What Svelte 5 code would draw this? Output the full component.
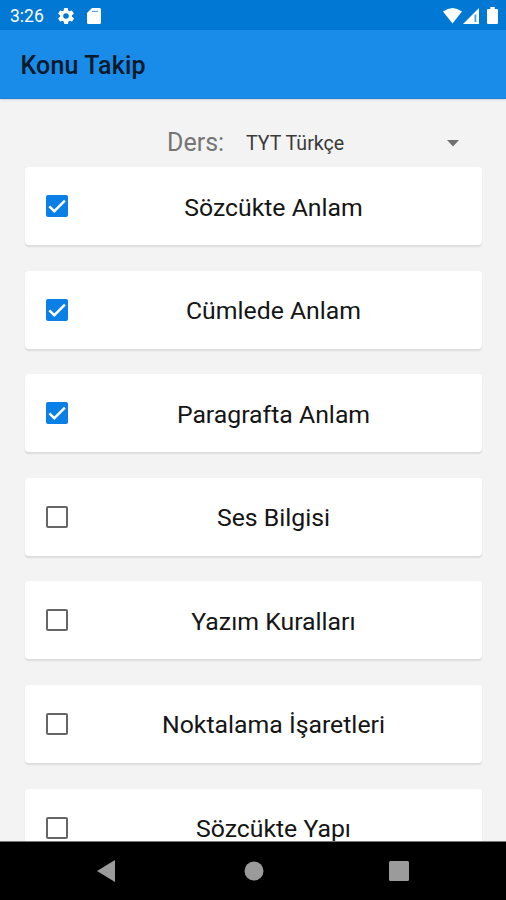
<script lang="ts">
	let course = $state('TYT Türkçe');

	let topics = $state([
		{ name: 'Sözcükte Anlam', done: true },
		{ name: 'Cümlede Anlam', done: true },
		{ name: 'Paragrafta Anlam', done: true },
		{ name: 'Ses Bilgisi', done: false },
		{ name: 'Yazım Kuralları', done: false },
		{ name: 'Noktalama İşaretleri', done: false },
		{ name: 'Sözcükte Yapı', done: false }
	]);
</script>

<div class="screen">
	<div class="status">
		<span class="time">3:26</span>
		<svg class="gear" viewBox="2 2 20 20" width="16" height="16">
			<path
				fill="#fff"
				d="M19.4 13a7.5 7.5 0 0 0 0-2l2.1-1.6a.5.5 0 0 0 .1-.7l-2-3.4a.5.5 0 0 0-.6-.2l-2.5 1a7.3 7.3 0 0 0-1.7-1l-.4-2.6a.5.5 0 0 0-.5-.5h-4a.5.5 0 0 0-.5.5L9.2 5.1a7.3 7.3 0 0 0-1.7 1l-2.5-1a.5.5 0 0 0-.6.2l-2 3.4a.5.5 0 0 0 .1.7L4.6 11a7.5 7.5 0 0 0 0 2l-2.1 1.6a.5.5 0 0 0-.1.7l2 3.4c.1.2.4.3.6.2l2.5-1a7.3 7.3 0 0 0 1.7 1l.4 2.6c0 .3.2.5.5.5h4c.3 0 .5-.2.5-.5l.4-2.6a7.3 7.3 0 0 0 1.7-1l2.5 1c.2.1.5 0 .6-.2l2-3.4a.5.5 0 0 0-.1-.7zM12 15.5a3.500 3.500 0 1 1 0-7 3.500 3.500 0 0 1 0 7z"
			/>
		</svg>
		<svg class="sd" viewBox="0 0 14 16" width="14" height="16">
			<path fill="#fff" d="M5 0h7.5Q14 0 14 1.5v13q0 1.500-1.500 1.500h-11Q0 16 0 14.500V5z" />
			<path stroke="#5ba5e5" stroke-width="1.200" d="M5 3.400h6" />
		</svg>
		<span class="spacer"></span>
		<svg viewBox="0 0 19 16" width="19" height="16">
			<path fill="#fff" d="M0 3.500Q9.500-3.500 19 3.500L9.500 15.500z" />
		</svg>
		<svg class="signal" viewBox="0 0 16 16" width="16" height="16">
			<path fill="#fff" d="M0 16 16 0v16z" />
			<path fill="#4a9ce3" d="M11.500 6.500h1.800v7.500h-1.800z" />
		</svg>
		<svg class="battery" viewBox="0 0 11 17" width="11" height="17">
			<path fill="#fff" d="M3.300 0h4.400v2H10q1 0 1 1v13q0 1-1 1H1q-1 0-1-1V3q0-1 1-1h2.300z" />
		</svg>
	</div>

	<header>Konu Takip</header>

	<main>
		<div class="picker">
			<span class="label">Ders:</span>
			<span class="course">{course}</span>
			<svg class="arrow" viewBox="0 0 12 7" width="12" height="7">
				<path fill="#707070" d="M0 0h12L6 6.500z" />
			</svg>
		</div>

		{#each topics as topic (topic.name)}
			<label class="card">
				<input type="checkbox" bind:checked={topic.done} />
				<span class="box" class:done={topic.done}>
					{#if topic.done}
						<svg viewBox="0 0 22 22" width="22" height="22">
							<path fill="none" stroke="#fff" stroke-width="2.400" d="m3.300 11.300 5 4.900L18.900 5.600" />
						</svg>
					{/if}
				</span>
				<span class="name">{topic.name}</span>
			</label>
		{/each}
	</main>

	<nav>
		<svg viewBox="0 0 18 22" width="18" height="22"><path fill="#9b9b9b" d="M18 0v22L0 11z" /></svg>
		<svg class="home" viewBox="0 0 20 20" width="20" height="20">
			<circle fill="#9b9b9b" cx="10" cy="10" r="9.500" />
		</svg>
		<svg viewBox="0 0 20 20" width="20" height="20"><rect fill="#9b9b9b" width="20" height="20" rx="1.500" /></svg>
	</nav>
</div>

<style>
	.screen {
		display: flex;
		flex-direction: column;
		width: 506px;
		height: 900px;
		overflow: hidden;
		background: #f3f3f3;
		font-family: Roboto, sans-serif;
	}

	svg {
		display: block;
		flex: none;
	}

	.status {
		display: flex;
		flex: none;
		align-items: center;
		box-sizing: border-box;
		height: 30px;
		padding: 1px 8px 0 10px;
		background: #0078d4;
		color: #fff;
	}

	.time {
		width: 48px;
		font-size: 17.5px;
	}

	.sd {
		margin-left: 13px;
	}

	.spacer {
		flex: 1;
	}

	.signal {
		margin-left: 1px;
	}

	.battery {
		margin-left: 8px;
	}

	header {
		flex: none;
		box-sizing: border-box;
		height: 69px;
		padding-left: 20.5px;
		border-bottom: 1px solid #1583dc;
		background: #188ce8;
		box-shadow: 0 1px 2px #0002;
		color: #06192b;
		font-size: 25px;
		font-weight: 500;
		letter-spacing: 0.15px;
		line-height: 72px;
	}

	main {
		flex: 1;
		min-height: 0;
		overflow: hidden;
		padding: 24px 24px 0 25px;
	}

	.picker {
		display: flex;
		align-items: center;
		height: 44px;
		padding: 0 23px 0 142px;
	}

	.label {
		width: 79px;
		margin-top: -5px;
		color: #757575;
		font-size: 25px;
		line-height: 38px;
	}

	.course {
		flex: 1;
		margin-top: -4px;
		color: #3a3a3a;
		font-size: 19.6px;
	}

	.arrow {
		margin-top: -4px;
	}

	.card {
		display: flex;
		align-items: center;
		box-sizing: border-box;
		height: 78px;
		margin-bottom: 25.6px;
		padding-left: 21px;
		border-radius: 4px;
		background: #fff;
		box-shadow: 0 1.5px 1.5px #00000018;
	}

	input {
		position: absolute;
		opacity: 0;
	}

	.box {
		flex: none;
		box-sizing: border-box;
		width: 22px;
		height: 22px;
		border: 2px solid #666;
		border-radius: 2px;

		&.done {
			border: none;
			background: #0a7fe6;
		}
	}

	.name {
		flex: 1;
		padding: 3px 3px 0 0;
		color: #151515;
		font-size: 24.8px;
		line-height: 30px;
		text-align: center;
	}

	nav {
		display: flex;
		flex: none;
		align-items: center;
		justify-content: space-between;
		box-sizing: border-box;
		height: 59px;
		padding: 0 97px;
		border-top: 1px solid #777;
		background: #000;
	}

	.home {
		margin-left: 3px;
	}
</style>
